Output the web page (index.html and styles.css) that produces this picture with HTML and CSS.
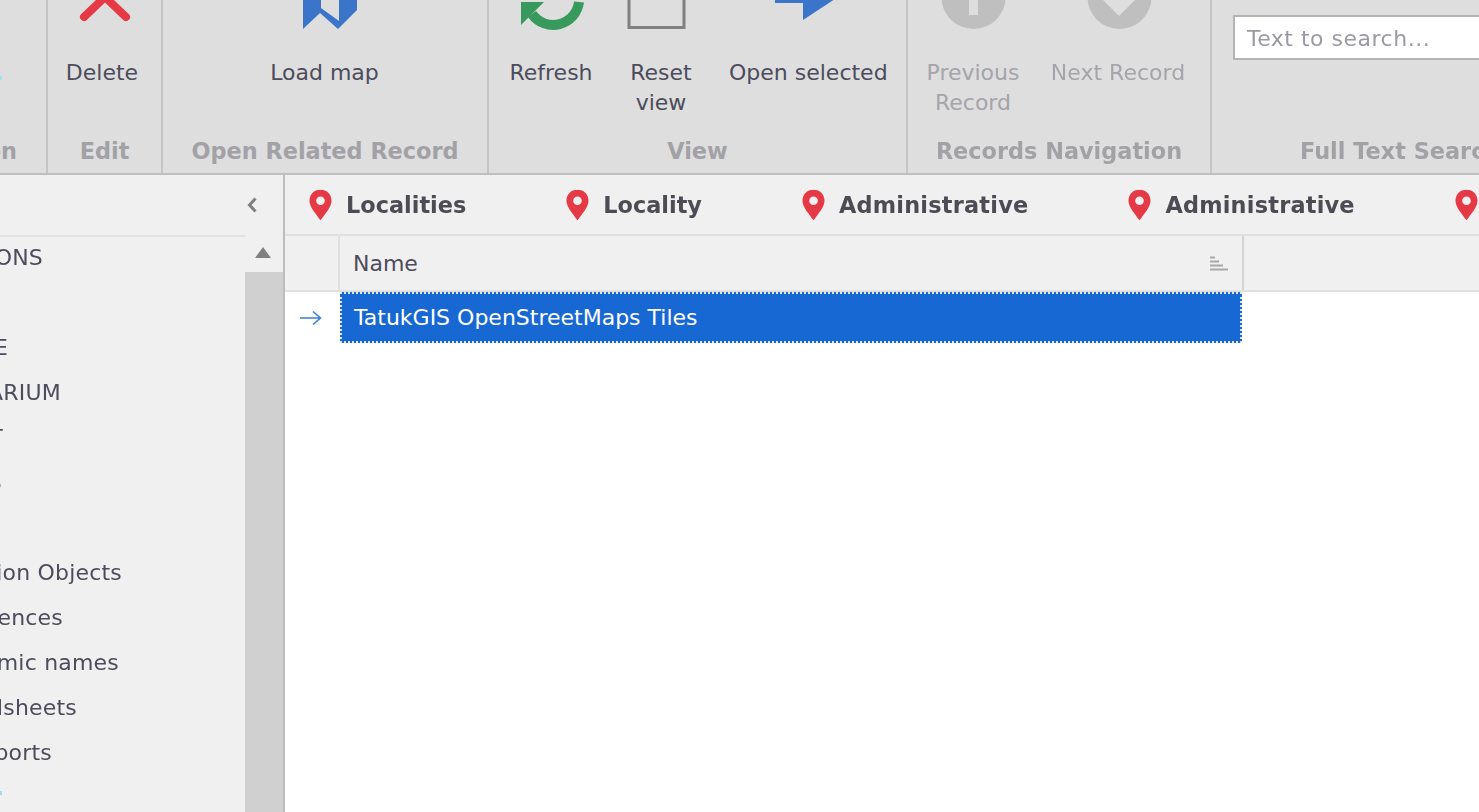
FILE: index.html
```html
<!DOCTYPE html>
<html lang="en">
<head>
  <meta charset="UTF-8">
  <title>Map records</title>
  <link rel="stylesheet" href="styles.css">
</head>
<body>
  <div class="ribbon">
    <div class="group group-first">
      <div class="buttons"><span class="stub stub-top"></span></div>
      <div class="group-title title-clip"><span>Action</span></div>
    </div>
    <div class="group group-edit">
      <div class="buttons">
        <div class="btn w-edit">
          <svg class="icon" viewBox="48 0 108 58"><path d="M84 17 L105 -3 L126 17" fill="none" stroke="#e63946" stroke-width="8" stroke-linecap="round" stroke-linejoin="miter"/></svg>
          <span>Delete</span>
        </div>
      </div>
      <div class="group-title">Edit</div>
    </div>
    <div class="group group-related">
      <div class="buttons">
        <div class="btn w-related">
          <svg class="icon" viewBox="163 0 323 58"><path d="M303 -4 H321 V8 L339 21 V-4 H357 V10 L338 29 L320 13 L303 29 Z" fill="#3a75c9"/></svg>
          <span>Load map</span>
        </div>
      </div>
      <div class="group-title">Open Related Record</div>
    </div>
    <div class="group group-view">
      <div class="buttons">
        <div class="btn w-refresh">
          <svg class="icon" viewBox="508 0 86 58">
            <path d="M579 2 A26 26 0 0 1 532 14" fill="none" stroke="#38995c" stroke-width="10"/>
            <path d="M521 25 V2 H544 Z" fill="#38995c"/>
          </svg>
          <span>Refresh</span>
        </div>
        <div class="btn w-reset">
          <svg class="icon" viewBox="629 0 64 58"><rect x="629" y="-20" width="55" height="47.5" fill="none" stroke="#808080" stroke-width="3"/></svg>
          <span>Reset<br>view</span>
        </div>
        <div class="btn w-open">
          <svg class="icon" viewBox="729 0 156 58"><path d="M775 -4 V3 H803 V20 L835 -1 V-4 Z" fill="#3a75c9"/></svg>
          <span>Open selected</span>
        </div>
      </div>
      <div class="group-title">View</div>
    </div>
    <div class="group group-nav">
      <div class="buttons disabled">
        <div class="btn w-prev">
          <svg class="icon" viewBox="926 0 94 58">
            <circle cx="973.5" cy="-3" r="32" fill="#bfbfbf"/>
            <rect x="969" y="-5" width="9" height="20" fill="#dedede"/>
          </svg>
          <span>Previous<br>Record</span>
        </div>
        <div class="btn w-next">
          <svg class="icon" viewBox="1050 0 136 58">
            <circle cx="1119.5" cy="-3" r="32" fill="#bfbfbf"/>
            <path d="M1102 -1 L1119 16 L1136 -1 Z" fill="#dedede"/>
          </svg>
          <span>Next Record</span>
        </div>
      </div>
      <div class="group-title">Records Navigation</div>
    </div>
    <div class="group group-search">
      <div class="search-box">Text to search...</div>
      <div class="group-title title-left">Full Text Search</div>
    </div>
  </div>

  <div class="main">
    <div class="sidebar">
      <div class="side-head">
        <svg class="collapse" width="12" height="18" viewBox="0 0 12 18"><path d="M9.5 2.5 L3.5 9 L9.5 15.5" fill="none" stroke="#808080" stroke-width="3"/></svg>
      </div>
      <div class="side-body">
        <div class="tree">
          <div class="tree-row end-43"><span>COLLECTIONS</span></div>
          <div class="tree-row"></div>
          <div class="tree-row end-8"><span>STORAGE</span></div>
          <div class="tree-row end-61"><span>HERBARIUM</span></div>
          <div class="tree-row end-3"><span>PLANT</span></div>
          <div class="tree-row end-2"><span>MAPS</span></div>
          <div class="tree-row"></div>
          <div class="tree-row end-122"><span>Collection Objects</span></div>
          <div class="tree-row end-63"><span>References</span></div>
          <div class="tree-row end-119"><span>Taxonomic names</span></div>
          <div class="tree-row end-77"><span>Spreadsheets</span></div>
          <div class="tree-row end-52"><span>Reports</span></div>
          <div class="tree-row"><span class="stub stub-bottom"></span></div>
        </div>
        <div class="scrollbar">
          <div class="scroll-btn"><span class="scroll-up"></span></div>
          <div class="scroll-thumb"></div>
        </div>
      </div>
    </div>

    <div class="content">
      <div class="tabs">
        <div class="tab"><svg class="pin" viewBox="0 0 24 32"><use href="#pin"/></svg><span>Localities</span></div>
        <div class="tab"><svg class="pin" viewBox="0 0 24 32"><use href="#pin"/></svg><span>Locality</span></div>
        <div class="tab tab-long"><svg class="pin" viewBox="0 0 24 32"><use href="#pin"/></svg><span>Administrative</span></div>
        <div class="tab tab-long"><svg class="pin" viewBox="0 0 24 32"><use href="#pin"/></svg><span>Administrative</span></div>
        <div class="tab"><svg class="pin" viewBox="0 0 24 32"><use href="#pin"/></svg></div>
      </div>
      <div class="grid-head">
        <div class="indicator-cell"></div>
        <div class="name-cell">
          <span>Name</span>
          <svg class="sort" width="18" height="15" viewBox="0 0 18 15">
            <path d="M0 1.5H5M0 5.5H9M0 9.5H13M0 13.5H18" stroke="#a8a8a8" stroke-width="2"/>
          </svg>
        </div>
      </div>
      <div class="grid-row">
        <div class="row-indicator">
          <svg width="22" height="16" viewBox="0 0 22 16"><path d="M0 8H20M13 1.5L20.5 8L13 14.5" fill="none" stroke="#3a7fd9" stroke-width="1.6"/></svg>
        </div>
        <div class="row-cell selected">TatukGIS OpenStreetMaps Tiles</div>
      </div>
    </div>
  </div>

  <svg class="defs" width="0" height="0">
    <symbol id="pin" viewBox="0 0 24 32">
      <path fill-rule="evenodd" d="M12 0 C5 0 0.5 5 0.5 11.5 C0.5 18 7 25 12 32 C17 25 23.5 18 23.5 11.5 C23.5 5 19 0 12 0 Z M12 7 A4.5 4.5 0 1 1 12 16 A4.5 4.5 0 1 1 12 7 Z" fill="#e63946"/>
    </symbol>
  </svg>
</body>
</html>
```

FILE: styles.css
```css
* {
  box-sizing: border-box;
}
html, body {
  margin: 0;
  height: 100%;
  overflow: hidden;
}
body {
  font-family: "DejaVu Sans", sans-serif;
  font-size: 22px;
  color: #4c4c5c;
  background: white;
  display: flex;
  flex-direction: column;
  filter: blur(0.5px);
}
.defs {
  position: absolute;
}
.stub {
  display: block;
  width: 2px;
  height: 4px;
}
.stub-top {
  margin-top: 76px;
  background: #9fe3e6;
}
.stub-bottom {
  margin: -10px auto 0 0;
  background: #a8d8f0;
}

/* ribbon */
.ribbon {
  display: flex;
  height: 175px;
  flex: none;
  background: #dedede;
  border-bottom: 2px solid #bfbfbf;
}
.group {
  display: flex;
  flex-direction: column;
  flex: none;
  height: 173px;
  border-right: 2px solid #c4c4c4;
}
.group-first { width: 48px; }
.group-edit { width: 115px; }
.group-related { width: 326px; }
.group-view { width: 419px; }
.group-nav { width: 304px; }
.group-search { width: 320px; border-right: none; }
.buttons {
  display: flex;
  flex: 1;
  min-height: 0;
}
.group-title {
  height: 30px;
  margin-bottom: 7px;
  line-height: 30px;
  text-align: center;
  font-size: 22.4px;
  font-weight: bold;
  color: #a2a2a6;
  white-space: nowrap;
}
.title-clip {
  display: flex;
  justify-content: flex-end;
  overflow: hidden;
  padding-right: 29px;
}
.title-left {
  text-align: left;
  padding-left: 88px;
}
.btn {
  flex: none;
  text-align: center;
  line-height: 30px;
  white-space: nowrap;
}
.icon {
  display: block;
  width: 100%;
  height: 58px;
  overflow: visible;
}
.disabled {
  color: #a4a4aa;
}
.w-edit { width: 108px; }
.w-related { width: 323px; }
.group-view .buttons { padding-left: 19px; gap: 36px; }
.w-refresh { width: 86px; margin-right: -1px; }
.w-reset { width: 64px; }
.w-open { width: 156px; }
.group-nav .buttons { padding-left: 18px; gap: 30px; }
.w-prev { width: 94px; }
.w-next { width: 136px; }
.search-box {
  flex: none;
  margin: 15px 0 76px 21px;
  width: 340px;
  height: 45px;
  padding-left: 12px;
  line-height: 43px;
  letter-spacing: 0.5px;
  background: white;
  border: 2px solid #b4b4b4;
  color: #9a9aa2;
}

/* lower part */
.main {
  display: flex;
  flex: 1;
  min-height: 0;
}
.sidebar {
  width: 285px;
  flex: none;
  background: #f0f0f0;
  border-right: 2px solid #bdbdbd;
  display: flex;
  flex-direction: column;
}
.side-head {
  height: 61px;
  flex: none;
  display: flex;
  align-items: center;
  justify-content: flex-end;
  padding-right: 25px;
  padding-bottom: 2px;
}
.side-body {
  flex: 1;
  display: flex;
  min-height: 0;
}
.tree {
  width: 245px;
  flex: none;
  overflow: hidden;
  border-top: 2px solid #e2e2e2;
  margin-top: -1px;
  letter-spacing: 0.2px;
}
.tree-row {
  height: 45px;
  display: flex;
  justify-content: flex-end;
  align-items: center;
  white-space: nowrap;
  position: relative;
  top: -2px;
}
.end-43 { width: 43px; }
.end-8 { width: 8px; }
.end-61 { width: 61px; }
.end-3 { width: 3px; }
.end-2 { width: 2px; }
.end-122 { width: 122px; }
.end-63 { width: 63px; }
.end-119 { width: 119px; }
.end-77 { width: 77px; }
.end-52 { width: 52px; }
.scrollbar {
  flex: 1;
  display: flex;
  flex-direction: column;
}
.scroll-btn {
  height: 36px;
  flex: none;
  display: flex;
  align-items: center;
  justify-content: center;
  padding: 0 2px 3px 0;
}
.scroll-up {
  width: 0;
  height: 0;
  border-left: 8px solid transparent;
  border-right: 8px solid transparent;
  border-bottom: 11px solid #808080;
}
.scroll-thumb {
  flex: 1;
  background: #d0d0d0;
}
.content {
  flex: 1;
  min-width: 0;
  display: flex;
  flex-direction: column;
}
.tabs {
  height: 61px;
  flex: none;
  background: #f0f0f0;
  border-bottom: 2px solid #e0e0e0;
  display: flex;
  align-items: center;
  padding-left: 24px;
  gap: 100px;
  white-space: nowrap;
  overflow: hidden;
}
.tab {
  display: flex;
  align-items: center;
  gap: 14px;
  font-size: 22.4px;
  font-weight: bold;
  color: #4c4c54;
  flex: none;
}
.tab-long {
  letter-spacing: 0.22px;
}
.pin {
  width: 23px;
  height: 32px;
  flex: none;
}
.grid-head {
  height: 56px;
  flex: none;
  display: flex;
  background: #f0f0f0;
  border-bottom: 2px solid #e0e0e0;
}
.indicator-cell {
  width: 55px;
  flex: none;
  border-right: 2px solid #e0e0e0;
}
.name-cell {
  width: 904px;
  flex: none;
  border-right: 2px solid #d4d4d4;
  display: flex;
  align-items: center;
  justify-content: space-between;
  padding: 0 14px 0 13px;
}
.grid-row {
  display: flex;
  height: 51px;
}
.row-indicator {
  width: 55px;
  flex: none;
  display: flex;
  align-items: center;
  justify-content: center;
  padding-right: 4px;
}
.row-cell {
  width: 902px;
  flex: none;
  line-height: 47px;
  padding-left: 12px;
}
.selected {
  background: #1868d3;
  color: white;
  border: 2px dotted #dfe6f2;
}
```
